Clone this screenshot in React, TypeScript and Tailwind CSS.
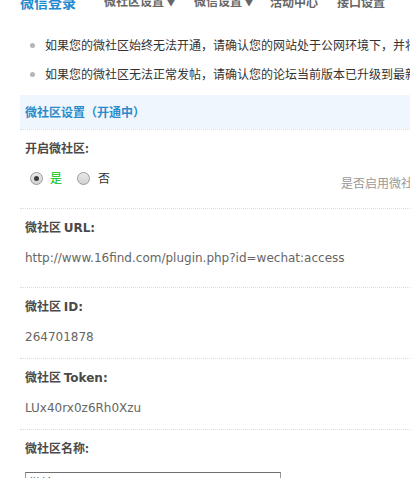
import React from "react";

const cjk = "font-['SimSun','Noto_Sans_CJK_SC','Liberation_Sans',sans-serif]";

function Radio({ checked }: { checked?: boolean }) {
  return (
    <span className="relative inline-flex h-[13px] w-[13px] items-center justify-center rounded-full border border-[#9a9a9a] bg-gradient-to-b from-[#e9e9e9] to-[#d2d2d2]">
      {checked && <span className="h-[5px] w-[5px] rounded-full bg-[#3c3c3c]" />}
    </span>
  );
}

function Section({
  label,
  children,
  tall,
}: {
  label: React.ReactNode;
  children: React.ReactNode;
  tall?: boolean;
}) {
  return (
    <div className={`border-t border-dotted border-[#c9e0f2] px-[5px] ${tall ? "h-[79px]" : "h-[71px]"}`}>
      <div className="mt-[9px] h-[18px] text-[12px] font-bold leading-[18px] text-[#4a4a4a]">{label}</div>
      {children}
    </div>
  );
}

export default function App() {
  return (
    <div className={`h-[478px] w-[410px] overflow-hidden bg-white text-[12px] ${cjk}`}>
      {/* nav */}
      <div className="-mt-[7px] flex h-[18px] items-center whitespace-nowrap pl-[20px] font-bold leading-[18px]">
        <span className="text-[14px] text-[#1e8ad0]">微信登录</span>
        <span className="ml-[28px] text-[12px] text-[#666]">微社区设置<span className="ml-[3px] text-[8px]">▼</span></span>
        <span className="ml-[19px] text-[12px] text-[#666]">微信设置<span className="ml-[3px] text-[8px]">▼</span></span>
        <span className="ml-[17px] text-[12px] text-[#666]">活动中心</span>
        <span className="ml-[19px] text-[12px] text-[#666]">接口设置</span>
      </div>

      {/* tips */}
      <div className="mt-[25px] w-[600px] pl-[30px] text-[#333]">
        <div className="flex h-[18px] items-center whitespace-nowrap leading-[18px]">
          <span className="h-[5px] w-[5px] rounded-full bg-[#b5b5b5]" />
          <span className="ml-[10px]">如果您的微社区始终无法开通，请确认您的网站处于公网环境下，并将网站设置为可访问</span>
        </div>
        <div className="mt-[11px] flex h-[18px] items-center whitespace-nowrap leading-[18px]">
          <span className="h-[5px] w-[5px] rounded-full bg-[#b5b5b5]" />
          <span className="ml-[10px]">如果您的微社区无法正常发帖，请确认您的论坛当前版本已升级到最新版本</span>
        </div>
      </div>

      {/* table */}
      <div className="ml-[20px] mt-[12px] w-[600px]">
        <div className="flex h-[34px] items-center bg-[#eff6fd] px-[5px] font-bold text-[#2a8bcb]">
          微社区设置（开通中）
        </div>

        <Section label="开启微社区:" tall>
          <div className="relative mt-[11px] flex h-[20px] items-center">
            <span className="ml-[5px] flex"><Radio checked /></span>
            <span className="ml-[7px] text-[#00c000]">是</span>
            <span className="ml-[15px] flex"><Radio /></span>
            <span className="ml-[8px] text-[#333]">否</span>
            <span className="absolute left-[316px] top-[5px] whitespace-nowrap leading-[20px] text-[#999]">是否启用微社区功能</span>
          </div>
        </Section>

        <Section label={<>微社区 <span className="font-['DejaVu_Sans',sans-serif]">URL:</span></>} tall>
          <div className="mt-[13px] h-[18px] whitespace-nowrap font-['DejaVu_Sans',sans-serif] text-[12px] leading-[18px] text-[#666]">
            http://www.16find.com/plugin.php?id=wechat:access
          </div>
        </Section>

        <Section label={<>微社区 <span className="font-['DejaVu_Sans',sans-serif]">ID:</span></>}>
          <div className="mt-[13px] h-[18px] whitespace-nowrap font-['DejaVu_Sans',sans-serif] text-[12px] leading-[18px] text-[#666]">
            264701878
          </div>
        </Section>

        <Section label={<>微社区 <span className="font-['DejaVu_Sans',sans-serif]">Token:</span></>}>
          <div className="mt-[13px] h-[18px] whitespace-nowrap font-['DejaVu_Sans',sans-serif] text-[12px] leading-[18px] text-[#666]">
            LUx40rx0z6Rh0Xzu
          </div>
        </Section>

        <div className="border-t border-dotted border-[#c9e0f2] px-[5px]">
          <div className="mt-[9px] h-[18px] font-bold leading-[18px] text-[#4a4a4a]">微社区名称:</div>
          <div className="mt-[15px] h-[22px] w-[256px] border border-[#999] border-t-[#6f6f6f] bg-white px-[3px] leading-[20px] text-[#333]">
            微社区
          </div>
        </div>
      </div>
    </div>
  );
}
